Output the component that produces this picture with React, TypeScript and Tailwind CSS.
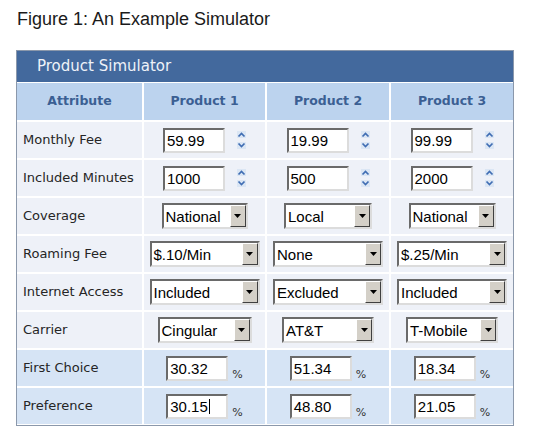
import React from "react";

const rows = [
  { label: "Monthly Fee", kind: "spin", values: ["59.99", "19.99", "99.99"] },
  { label: "Included Minutes", kind: "spin", values: ["1000", "500", "2000"] },
  { label: "Coverage", kind: "select", values: ["National", "Local", "National"], widths: [86, 88, 87] },
  { label: "Roaming Fee", kind: "select", values: ["$.10/Min", "None", "$.25/Min"], widths: [110, 110, 110] },
  { label: "Internet Access", kind: "select", values: ["Included", "Excluded", "Included"], widths: [110, 110, 110] },
  { label: "Carrier", kind: "select", values: ["Cingular", "AT&T", "T-Mobile"], widths: [94, 92, 92] },
  { label: "First Choice", kind: "pct", values: ["30.32", "51.34", "18.34"] },
  { label: "Preference", kind: "pct", values: ["30.15", "48.80", "21.05"] },
];

const fieldBorder =
  "border-2 border-t-[#6a6a6a] border-l-[#6a6a6a] border-b-[#dcdcdc] border-r-[#dcdcdc] bg-white";

function TextBox({ value, caret }: { value: string; caret?: boolean }) {
  return (
    <div className={`${fieldBorder} w-[62px] h-[25px] flex items-center pl-[2px] font-['Liberation_Sans',sans-serif] text-[15px] text-black leading-none`}>
      {value}
      {caret && <span className="w-px h-[15px] bg-black ml-px" />}
    </div>
  );
}

function Spinner() {
  return (
    <svg width="9" height="20" viewBox="0 0 9 20">
      <rect x="0" y="1" width="9" height="7" fill="#dbe6f4" />
      <rect x="0" y="12" width="9" height="7" fill="#dbe6f4" />
      <path d="M1.5 6.5 L4.5 3.5 L7.5 6.5" fill="none" stroke="#3f6db3" strokeWidth="1.7" />
      <path d="M1.5 13.5 L4.5 16.5 L7.5 13.5" fill="none" stroke="#3f6db3" strokeWidth="1.7" />
    </svg>
  );
}

function Select({ value, width }: { value: string; width: number }) {
  return (
    <div
      className={`${fieldBorder} h-[26px] flex items-stretch font-['Liberation_Sans',sans-serif] text-[15px] text-black`}
      style={{ width }}
    >
      <div className="flex-1 flex items-center pl-[2px] leading-none whitespace-nowrap overflow-hidden">{value}</div>
      <div className="w-[16px] bg-[#d4d0c8] border border-t-white border-l-white border-b-[#404040] border-r-[#404040] flex items-center justify-center">
        <svg width="7" height="4" viewBox="0 0 7 4">
          <path d="M0 0 H7 L3.5 4 Z" fill="#000" />
        </svg>
      </div>
    </div>
  );
}

export default function App() {
  return (
    <div className="w-[533px] h-[442px] bg-white font-['DejaVu_Sans',sans-serif]">
      <div className="h-[30px] pt-[8px] pl-[17px] font-['Liberation_Sans',sans-serif] text-[18px] leading-[22px] text-[#1a1a1a]">
        Figure 1: An Example Simulator
      </div>

      <div className="mt-[20px] ml-[16px] w-[498px] border border-[#8b98ab] bg-white">
        <div className="h-[31px] bg-[#43699d] flex items-center pl-[20px] text-[15px] text-[#eef2f8]">
          Product Simulator
        </div>

        <div className="grid grid-cols-[125px_121px_122px_122px] gap-[2px] pt-px pb-[1px] bg-white">
          {["Attribute", "Product 1", "Product 2", "Product 3"].map((h) => (
            <div key={h} className="h-[37px] bg-[#bcd3ee] flex items-center justify-center text-[12.5px] font-bold text-[#3b5f93]">
              {h}
            </div>
          ))}

          {rows.map((row) => {
            const bg = row.kind === "pct" ? "bg-[#d6e4f5]" : "bg-[#eef1f8]";
            return (
              <React.Fragment key={row.label}>
                <div className={`h-[36px] ${bg} flex items-center pl-[6px] text-[13px] text-[#252525] whitespace-nowrap`}>
                  {row.label}
                </div>
                {row.values.map((v, i) => (
                  <div key={i} className={`h-[36px] ${bg} flex items-center justify-center`}>
                    {row.kind === "spin" && (
                      <div className="flex items-center gap-[12px]">
                        <TextBox value={v} />
                        <Spinner />
                      </div>
                    )}
                    {row.kind === "select" && <Select value={v} width={row.widths![i]} />}
                    {row.kind === "pct" && (
                      <div className="flex items-end gap-[4px]">
                        <TextBox value={v} caret={row.label === "Preference" && i === 0} />
                        <span className="text-[11px] text-[#333] leading-none mb-[1px]">%</span>
                      </div>
                    )}
                  </div>
                ))}
              </React.Fragment>
            );
          })}
        </div>
      </div>
    </div>
  );
}
